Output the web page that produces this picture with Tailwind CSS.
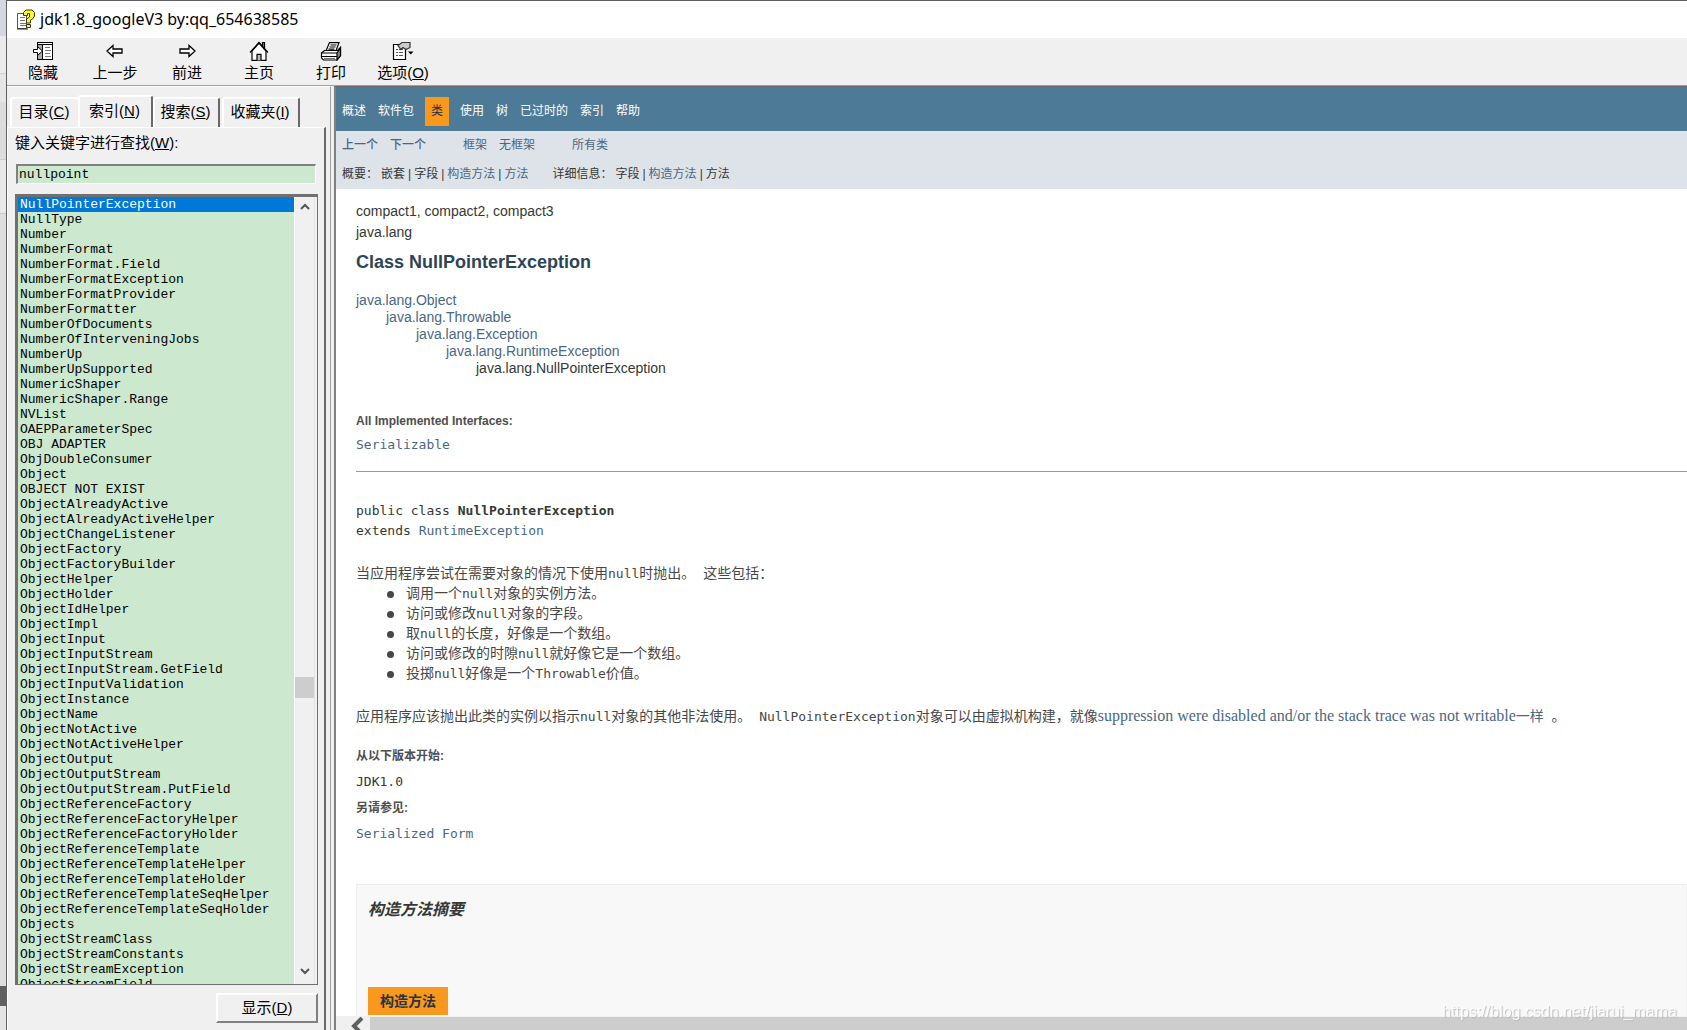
<!DOCTYPE html>
<html lang="zh-CN">
<head>
<meta charset="utf-8">
<title>jdk1.8_googleV3 by:qq_654638585</title>
<script src="https://cdn.jsdelivr.net/npm/@tailwindcss/browser@4"></script>
</head>
<body class="bg-[#e4e4e4] font-['Liberation_Sans','Noto_Sans_CJK_SC',sans-serif] text-black">
<div class="flex h-screen overflow-hidden">
  <div class="flex w-[6px] shrink-0 flex-col">
    <div class="h-9 bg-[#d3d7df]"></div>
    <div class="h-[38px] border-b border-[#d0d0d0] bg-[#ebebeb]"></div>
    <div class="h-7 bg-[#e6e6e6]"></div>
    <div class="h-[58px] border-b border-[#cccccc] bg-[#dcdcdc]"></div>
    <div class="h-[54px] border-b border-[#c8c8c8] bg-[#e8e8e8]"></div>
    <div class="grow bg-[#dedede]"></div>
    <div class="mb-6 h-5 bg-[#606060]"></div>
  </div>
  <div class="flex min-w-0 grow flex-col border-t border-l border-[#606060] bg-[#f0f0f0]">
    <header class="flex h-[37px] shrink-0 items-center gap-1 bg-white pb-[2px] pl-[9px]">
      <svg class="h-6 w-5" viewBox="0 0 20 24" aria-hidden="true">
        <path d="M1.5 6.500h9v15h-9z" fill="#fff" stroke="#555"/>
        <path d="M4 10.500h5M4 13.500h5M4 16.500h6M4 18.500h6" stroke="#777"/>
        <path d="M1 22h11" stroke="#222"/>
        <path d="M7.500 8.500V5.500L10 3h6l2.500 2.500V9l-2 3-2 1v3h-4v-4l3-2V6.500h-2v2z" fill="#ff0" stroke="#333"/>
        <path d="M10.500 17.500h4v3h-4z" fill="#ff0" stroke="#333"/>
      </svg>
      <h1 class="font-['Noto_Sans'] text-base leading-5">jdk1.8_googleV3 by:qq_654638585</h1>
    </header>

    <nav class="flex h-12 shrink-0 border-b border-[#a0a0a0] text-[15px] leading-5 [&>button]:flex [&>button]:w-[72px] [&>button]:flex-col [&>button]:items-center [&>button]:gap-[2px] [&>button]:pt-[3px] [&_svg]:h-5 [&_svg]:w-[22px]">
      <button><svg viewBox="0 0 22 20" fill="none" stroke="#000" aria-hidden="true" shape-rendering="crispEdges"><path d="M5 1h16v18H5z" fill="#fff" stroke="none"/><path d="M5 3h5v15H5z" fill="#aaa" stroke="none"/><path d="M5.500 7V1.500h15v17h-15V13M5 3.500h15M10.500 4v14"/><path d="M13 6.500h5M13 9.500h6M13 12.500h5M13 15.500h6" stroke="#777"/><path d="M1.500 8.500h4v-3l5 4.500-5 4.500v-3h-4z" fill="#fff" shape-rendering="auto"/></svg>隐藏</button>
      <button><svg viewBox="0 0 22 20" fill="#fff" stroke="#000" stroke-width="1.300" aria-hidden="true"><path d="M3 10l6-5.500v3.500h9v4H9v3.500z"/></svg>上一步</button>
      <button><svg viewBox="0 0 22 20" fill="#fff" stroke="#000" stroke-width="1.300" aria-hidden="true"><path d="M19 10l-6-5.500v3.500H4v4h9v3.500z"/></svg>前进</button>
      <button><svg viewBox="0 0 22 20" fill="#fff" stroke="#000" stroke-width="1.200" aria-hidden="true"><path d="M14.500 5V1.500h2V8" fill="#888"/><path d="M4 19.400V10l7-8 7 8v9.400z"/><path d="M2 11.500l9-10 9 10" fill="none"/><path d="M9 19.400v-6h4v6" fill="#bbb"/></svg>主页</button>
      <button><svg viewBox="0 0 22 20" fill="#fff" stroke="#000" stroke-width="1.200" aria-hidden="true"><path d="M5.500 11l4-9.400h9.500L15.500 11z"/><path d="M10.500 4h6M9.500 6h6M8.500 8.200h6"/><path d="M1.500 12l3-2.500h13l3-3v8L17 19H3.500l-2-2z"/><path d="M17 12l3.500-5v7.500L17 19z" fill="#888"/><path d="M1.500 12H17M2 15.500h15"/><path d="M4 17.500h11" stroke="#777"/></svg>打印</button>
      <button><svg viewBox="0 0 22 20" fill="#fff" stroke="#000" stroke-width="1.200" aria-hidden="true"><path d="M1.500 3.500h12v15h-12z"/><path d="M4 8.500h2M4 11.500h2M4 14.500h2M7 8.500h4M7 11.500h4M7 14.500h4" stroke="#555"/><path d="M6 4.500l4-3h8v5l-4 2-3-2-2 2z" fill="#ccc" stroke="#333"/><path d="M16 10.500h5.500l-2.750 3z" fill="#000" stroke="none"/></svg><span>选项(<u>O</u>)</span></button>
    </nav>

    <div class="flex min-h-0 grow">
      <aside class="flex w-[324px] shrink-0 flex-col border-t border-r border-t-white border-r-[#a0a0a0] pr-1 text-[15px] leading-5">
        <div role="tablist" class="flex h-10 shrink-0 items-end pt-[7px] pl-[3px] [&>button]:rounded-t-[3px] [&>button]:border-t-2 [&>button]:border-l-2 [&>button]:border-t-white [&>button]:border-l-white [&>button]:pr-[2px] [&>button]:pb-[2px]">
          <button role="tab" class="h-[30px] w-[68px]">目录(<u>C</u>)</button>
          <button role="tab" aria-selected="true" class="h-8 w-[75px] border-r-2 border-r-[#696969]">索引(<u>N</u>)</button>
          <button role="tab" class="h-[30px] w-[67px] border-r-2 border-r-[#696969]">搜索(<u>S</u>)</button>
          <button role="tab" class="ml-[2px] h-[30px] w-[78px] border-r-2 border-r-[#696969]">收藏夹(<u>I</u>)</button>
        </div>
        <section class="flex min-h-0 grow flex-col border-t border-r-2 border-l border-t-white border-r-[#696969] border-l-white pr-[6px] pl-[7px]">
          <label for="kw" class="mt-[5px]">键入关键字进行查找(<u>W</u>):</label>
          <input id="kw" value="nullpoint" class="mt-[11px] mr-[2px] ml-px h-5 shrink-0 border-t-2 border-r border-b border-l-2 border-t-[#808080] border-r-white border-b-white border-l-[#808080] bg-[#cce8cf] pl-px font-['Liberation_Mono',monospace] text-[13px] outline-none">
          <div class="mt-[10px] flex min-h-0 grow border-t-[3px] border-r border-b border-l-[3px] border-[#707070]">
            <ul role="listbox" class="min-w-0 grow overflow-hidden bg-[#cce8cf] font-['Liberation_Mono',monospace] text-[13px] leading-[15px] [&>li]:h-[15px] [&>li]:pl-[2px]">
              <li role="option" aria-selected="true" class="bg-[#0078d7] text-white">NullPointerException</li>
              <li>NullType</li><li>Number</li><li>NumberFormat</li><li>NumberFormat.Field</li><li>NumberFormatException</li><li>NumberFormatProvider</li><li>NumberFormatter</li><li>NumberOfDocuments</li><li>NumberOfInterveningJobs</li><li>NumberUp</li><li>NumberUpSupported</li><li>NumericShaper</li><li>NumericShaper.Range</li><li>NVList</li><li>OAEPParameterSpec</li><li>OBJ ADAPTER</li><li>ObjDoubleConsumer</li><li>Object</li><li>OBJECT NOT EXIST</li><li>ObjectAlreadyActive</li><li>ObjectAlreadyActiveHelper</li><li>ObjectChangeListener</li><li>ObjectFactory</li><li>ObjectFactoryBuilder</li><li>ObjectHelper</li><li>ObjectHolder</li><li>ObjectIdHelper</li><li>ObjectImpl</li><li>ObjectInput</li><li>ObjectInputStream</li><li>ObjectInputStream.GetField</li><li>ObjectInputValidation</li><li>ObjectInstance</li><li>ObjectName</li><li>ObjectNotActive</li><li>ObjectNotActiveHelper</li><li>ObjectOutput</li><li>ObjectOutputStream</li><li>ObjectOutputStream.PutField</li><li>ObjectReferenceFactory</li><li>ObjectReferenceFactoryHelper</li><li>ObjectReferenceFactoryHolder</li><li>ObjectReferenceTemplate</li><li>ObjectReferenceTemplateHelper</li><li>ObjectReferenceTemplateHolder</li><li>ObjectReferenceTemplateSeqHelper</li><li>ObjectReferenceTemplateSeqHolder</li><li>Objects</li><li>ObjectStreamClass</li><li>ObjectStreamConstants</li><li>ObjectStreamException</li><li>ObjectStreamField</li>
            </ul>
            <div class="mr-[2px] flex w-[21px] shrink-0 flex-col items-center border-r border-l border-r-[#e3e3e3] border-l-white pt-[6px] pb-[9px]">
              <svg class="h-2 w-[10px]" viewBox="0 0 10 8" fill="none" stroke="#555" stroke-width="2" aria-hidden="true"><path d="M1 6l4-4 4 4"/></svg>
              <div class="grow-[464]"></div>
              <div class="h-[21px] w-full bg-[#cdcdcd]"></div>
              <div class="grow-[268]"></div>
              <svg class="h-2 w-[10px]" viewBox="0 0 10 8" fill="none" stroke="#555" stroke-width="2" aria-hidden="true"><path d="M1 2l4 4 4-4"/></svg>
            </div>
          </div>
          <button class="mt-2 mb-[7px] h-[30px] w-[102px] shrink-0 self-end border-t-2 border-r-2 border-b-2 border-l-2 border-t-white border-r-[#808080] border-b-[#808080] border-l-white">显示(<u>D</u>)</button>
        </section>
      </aside>

      <div class="ml-[3px] flex min-w-0 grow flex-col border-t border-l-2 border-t-[#696969] border-l-[#808080] bg-white text-[#353833]">
        <main class="min-h-0 grow overflow-hidden">
          <nav class="flex h-11 items-center gap-3 bg-[#4d7a97] px-[6px] pt-1 text-xs text-white">
            <a href="#">概述</a><a href="#">软件包</a><a href="#" class="-mx-px flex h-[29px] items-center bg-[#f8981d] px-[6px] text-[#253441]">类</a><a href="#">使用</a><a href="#">树</a><a href="#">已过时的</a><a href="#">索引</a><a href="#">帮助</a>
          </nav>
          <div class="flex h-[58px] flex-col justify-between bg-[#dee3e9] px-[6px] pt-[5px] pb-[6px] text-xs leading-[18px] [&_a]:text-[#4a6782]">
            <div class="flex gap-[37px]">
              <div class="flex gap-3 font-medium"><a href="#">上一个</a><a href="#">下一个</a></div>
              <div class="flex gap-3"><a href="#">框架</a><a href="#">无框架</a></div>
              <a href="#">所有类</a>
            </div>
            <div class="flex gap-6">
              <div class="flex gap-[3px]"><span>概要：</span><span>嵌套</span>|<span>字段</span>|<a href="#">构造方法</a>|<a href="#">方法</a></div>
              <div class="flex gap-[3px]"><span>详细信息：</span><span>字段</span>|<a href="#">构造方法</a>|<span>方法</span></div>
            </div>
          </div>

          <article class="pt-3 pl-5 text-sm leading-5 [&_a]:text-[#4a6782] [&_code]:font-['DejaVu_Sans_Mono',monospace] [&_code]:text-[13px] [&_code]:leading-none">
            <p class="leading-[21px]">compact1, compact2, compact3</p>
            <p class="leading-[21px]">java.lang</p>
            <h2 class="mt-[9px] text-lg leading-5 font-bold text-[#2c4557]">Class NullPointerException</h2>
            <ul class="mt-5 leading-[17px] [&_ul]:pl-[30px]">
              <li><a href="#">java.lang.Object</a>
                <ul><li><a href="#">java.lang.Throwable</a>
                  <ul><li><a href="#">java.lang.Exception</a>
                    <ul><li><a href="#">java.lang.RuntimeException</a>
                      <ul><li>java.lang.NullPointerException</li></ul></li></ul></li></ul></li></ul></li>
            </ul>
            <dl class="mt-[34px]">
              <dt class="text-xs leading-5 font-bold text-[#4e4e4e]">All Implemented Interfaces:</dt>
              <dd class="mt-[3px]"><code><a href="#">Serializable</a></code></dd>
            </dl>
            <hr class="mt-[17px] border-[#999]">
            <p class="mt-7"><code>public class <b>NullPointerException</b></code></p>
            <p><code>extends <a href="#">RuntimeException</a></code></p>
            <div class="mt-[23px] text-[#474747]">
              <p>当应用程序尝试在需要对象的情况下使用<code>null</code>时抛出。<code> </code> 这些包括：</p>
              <ul class="pl-[31px] [&>li]:before:mr-3 [&>li]:before:inline-block [&>li]:before:size-[7px] [&>li]:before:rounded-full [&>li]:before:bg-[#474747] [&>li]:before:align-middle">
                <li>调用一个<code>null</code>对象的实例方法。</li>
                <li>访问或修改<code>null</code>对象的字段。</li>
                <li>取<code>null</code>的长度，好像是一个数组。</li>
                <li>访问或修改的时隙<code>null</code>就好像它是一个数组。</li>
                <li>投掷<code>null</code>好像是一个<code>Throwable</code>价值。</li>
              </ul>
              <p class="mt-[23px] whitespace-nowrap">应用程序应该抛出此类的实例以指示<code>null</code>对象的其他非法使用。<code> </code> <code>NullPointerException</code>对象可以由虚拟机构建，就像<a href="#" class="font-['Liberation_Serif','Noto_Sans_CJK_SC',serif] text-base leading-none">suppression were disabled and/or the stack trace was not writable<span class="text-sm leading-none">一样</span></a><code> </code>。</p>
            </div>
            <dl class="[&>dd]:mt-[5px] [&>dt]:text-xs [&>dt]:leading-5 [&>dt]:font-bold [&>dt]:text-[#4e4e4e]">
              <dt class="mt-5">从以下版本开始:</dt>
              <dd><code>JDK1.0</code></dd>
              <dt class="mt-[7px]">另请参见:</dt>
              <dd><code><a href="#">Serialized Form</a></code></dd>
            </dl>
            <section class="mt-[41px] flex h-40 flex-col items-start border border-[#ededed] bg-[#f8f8f8] px-[11px] pt-[15px]">
              <h3 class="text-base leading-5 font-bold italic">构造方法摘要</h3>
              <h4 class="mt-[67px] h-7 bg-[#f8981d] px-3 text-sm leading-7 font-bold text-[#253441]">构造方法</h4>
            </section>
          </article>
        </main>
        <div class="flex h-[14px] shrink-0 items-start bg-[#f0f0f0] pt-px">
          <svg class="ml-[14px] h-[13px] w-5 shrink-0" viewBox="0 0 20 13" fill="none" stroke="#606060" stroke-width="4" aria-hidden="true"><path d="M12 1L4 9l8 8"/></svg>
          <div class="h-full grow bg-[#cdcdcd]"></div>
        </div>
      </div>
    </div>
  </div>
</div>
<div class="pointer-events-none fixed right-[10px] bottom-2 text-base leading-5 text-white/80 [text-shadow:1px_1px_1px_#bbb]">https://blog.csdn.net/jiarui_mama</div>
</body>
</html>
